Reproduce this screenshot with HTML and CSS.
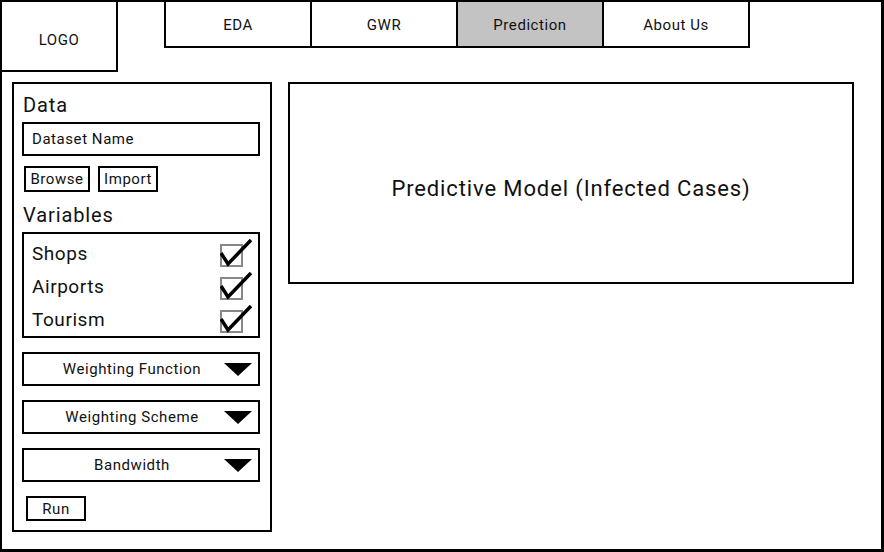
FILE: index.html
```html
<!DOCTYPE html>
<html>
<head>
<meta charset="utf-8">
<link rel="stylesheet" href="styles.css">
</head>
<body>
<div class="frame">
  <header class="header">
    <div class="logo">LOGO</div>
    <nav class="tabs">
      <div class="tab">EDA</div>
      <div class="tab">GWR</div>
      <div class="tab active">Prediction</div>
      <div class="tab">About Us</div>
    </nav>
  </header>
  <div class="content">
    <aside class="sidebar">
      <div class="heading">Data</div>
      <div class="input">Dataset Name</div>
      <div class="buttons">
        <div class="btn browse">Browse</div>
        <div class="btn import">Import</div>
      </div>
      <div class="heading vars-heading">Variables</div>
      <div class="varbox">
        <div class="var"><span>Shops</span>
          <svg class="check" width="34" height="30" viewBox="0 0 34 30"><rect x="1" y="6" width="21" height="21" fill="none" stroke="#888" stroke-width="2"/><polyline points="1,14 8,25 31,1" fill="none" stroke="#000" stroke-width="3.5" stroke-linejoin="miter"/></svg>
        </div>
        <div class="var"><span>Airports</span>
          <svg class="check" width="34" height="30" viewBox="0 0 34 30"><rect x="1" y="6" width="21" height="21" fill="none" stroke="#888" stroke-width="2"/><polyline points="1,14 8,25 31,1" fill="none" stroke="#000" stroke-width="3.5" stroke-linejoin="miter"/></svg>
        </div>
        <div class="var"><span>Tourism</span>
          <svg class="check" width="34" height="30" viewBox="0 0 34 30"><rect x="1" y="6" width="21" height="21" fill="none" stroke="#888" stroke-width="2"/><polyline points="1,14 8,25 31,1" fill="none" stroke="#000" stroke-width="3.5" stroke-linejoin="miter"/></svg>
        </div>
      </div>
      <div class="select"><span class="label">Weighting Function</span><span class="arrow"></span></div>
      <div class="select"><span class="label">Weighting Scheme</span><span class="arrow"></span></div>
      <div class="select"><span class="label">Bandwidth</span><span class="arrow"></span></div>
      <div class="btn run">Run</div>
    </aside>
    <main class="chart">Predictive Model (Infected Cases)</main>
  </div>
</div>
</body>
</html>
```
FILE: styles.css
```css
* { box-sizing: border-box; }
html, body { margin: 0; padding: 0; background: #fff; }
body {
  font-family: Roboto, "Liberation Sans", sans-serif;
  color: #111;
  letter-spacing: 0.035em;
}

.frame {
  width: 884px;
  height: 552px;
  border: 2px solid #000;
  border-right-width: 3px;
  border-bottom-width: 3px;
}

.header {
  display: flex;
  align-items: flex-start;
}

.logo {
  width: 116px;
  height: 70px;
  border-right: 2px solid #000;
  border-bottom: 2px solid #000;
  display: flex;
  align-items: center;
  justify-content: center;
  font-size: 15px;
  padding-top: 7px;
}

.tabs {
  display: flex;
  margin-left: 46px;
  margin-top: -2px;
}

.tab {
  width: 148px;
  height: 48px;
  border: 2px solid #000;
  margin-right: -2px;
  display: flex;
  align-items: center;
  justify-content: center;
  font-size: 15px;
  padding-top: 1px;
}
.tab.active { background: #c3c3c3; }

.content {
  display: flex;
  align-items: flex-start;
  gap: 16px;
  padding: 10px 0 0 10px;
}

.sidebar {
  width: 260px;
  height: 450px;
  border: 2px solid #000;
  padding: 8px 10px 0 8px;
  display: flex;
  flex-direction: column;
  align-items: stretch;
}

.heading {
  font-size: 20px;
  line-height: 24px;
  padding-left: 1px;
  padding-top: 1px;
  height: 24px;
  letter-spacing: 0.045em;
}

.input {
  margin-top: 6px;
  height: 34px;
  border: 2px solid #000;
  font-size: 15px;
  display: flex;
  align-items: center;
  padding-left: 8px;
}

.buttons {
  display: flex;
  gap: 8px;
  margin-top: 10px;
  margin-left: 2px;
}

.btn {
  height: 26px;
  border: 2px solid #000;
  font-size: 15px;
  display: flex;
  align-items: center;
  justify-content: center;
}
.browse { width: 66px; }
.import { width: 60px; }

.vars-heading { margin-top: 10px; }

.varbox {
  margin-top: 6px;
  height: 106px;
  border: 2px solid #000;
  padding: 3px 4px 0 8px;
}

.var {
  height: 33px;
  display: flex;
  align-items: center;
  justify-content: space-between;
  font-size: 19px;
}
.check { display: block; }

.select {
  margin-top: 14px;
  height: 34px;
  border: 2px solid #000;
  display: flex;
  align-items: center;
  padding: 0 6px 0 16px;
  font-size: 15px;
}
.select .label { flex: 1; text-align: center; }
.arrow {
  width: 0;
  height: 0;
  border-left: 14px solid transparent;
  border-right: 14px solid transparent;
  border-top: 13px solid #000;
}

.run {
  margin-top: 14px;
  margin-left: 4px;
  width: 60px;
  height: 25px;
}

.chart {
  width: 566px;
  height: 202px;
  border: 2px solid #000;
  display: flex;
  align-items: center;
  justify-content: center;
  font-size: 22px;
  letter-spacing: 0.04em;
  padding-top: 10px;
}
```
